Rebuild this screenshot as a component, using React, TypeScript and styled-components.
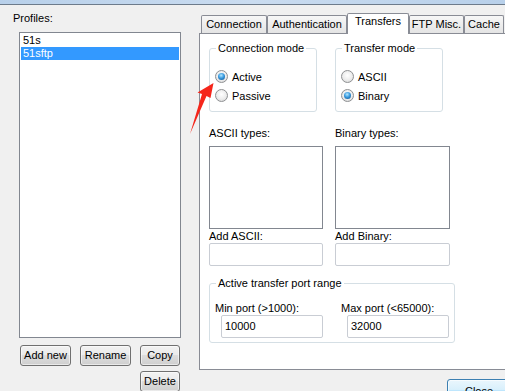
import styled, { createGlobalStyle } from "styled-components";

const GlobalStyle = createGlobalStyle`
  html, body {
    margin: 0;
    padding: 0;
    background: #f0f0f0;
  }
  body {
    font-family: "Liberation Sans", Arial, sans-serif;
    font-size: 11px;
    color: #000;
  }
`;

const Window = styled.div`
  position: relative;
  width: 505px;
  height: 391px;
  overflow: hidden;
  background: #f0f0f0;
  display: flex;
  flex-direction: column;
`;

const TitleStrip = styled.div`
  height: 4px;
  flex-shrink: 0;
  background: linear-gradient(to right, #b8d0ea, #cadcf0 50%, #b8d0ea);
  border-bottom: 1px solid #6d7b8b;
`;

const Body = styled.div`
  display: flex;
  flex: 1;
  min-height: 0;
`;

const LeftPane = styled.div`
  width: 199px;
  flex-shrink: 0;
  display: flex;
  flex-direction: column;
  padding-top: 7px;
`;

const PaneLabel = styled.div`
  padding-left: 13px;
  line-height: 13px;
`;

const ProfileList = styled.div`
  margin: 7px 0 0 19px;
  width: 162px;
  height: 306px;
  flex-shrink: 0;
  box-sizing: border-box;
  border: 1px solid #828790;
  background: #fff;
  padding: 1px;
`;

const ProfileItem = styled.div<{ $selected?: boolean }>`
  height: 13px;
  line-height: 13px;
  padding-left: 2px;
  background: ${(p) => (p.$selected ? "#3399ff" : "transparent")};
  color: ${(p) => (p.$selected ? "#fff" : "#000")};
`;

const ButtonGrid = styled.div`
  margin: 7px 0 0 20px;
  width: 160px;
  display: flex;
  flex-wrap: wrap;
  justify-content: flex-end;
  column-gap: 9px;
  row-gap: 5px;
`;

const PushButton = styled.button<{ $w: number }>`
  width: ${(p) => p.$w}px;
  height: 21px;
  box-sizing: border-box;
  padding: 0;
  border: 1px solid #707070;
  border-radius: 3px;
  background: linear-gradient(#f2f2f2 0%, #ebebeb 45%, #dddddd 50%, #cfcfcf 100%);
  box-shadow: inset 0 0 0 1px rgba(255, 255, 255, 0.55);
  font-family: inherit;
  font-size: 11px;
  line-height: 19px;
  color: #000;
`;

const RightPane = styled.div`
  width: 320px;
  flex-shrink: 0;
  display: flex;
  flex-direction: column;
  padding-top: 8px;
`;

const TabRow = styled.div`
  display: flex;
  align-items: flex-end;
  height: 21px;
  padding-left: 2px;
  margin-bottom: -1px;
  position: relative;
  z-index: 1;
`;

const Tab = styled.div<{ $w: number; $active?: boolean }>`
  width: ${(p) => p.$w}px;
  height: ${(p) => (p.$active ? 21 : 18)}px;
  margin-bottom: ${(p) => (p.$active ? 0 : 1)}px;
  box-sizing: border-box;
  flex-shrink: 0;
  border: 1px solid #898c95;
  border-bottom: none;
  border-radius: 2px 2px 0 0;
  background: ${(p) =>
    p.$active ? "#fff" : "linear-gradient(#f7f7f7, #e4e4e4)"};
  padding-top: ${(p) => (p.$active ? 1 : 2)}px;
  line-height: 13px;
  text-align: center;
  white-space: nowrap;
`;

const Panel = styled.div`
  width: 320px;
  height: 337px;
  flex-shrink: 0;
  box-sizing: border-box;
  border: 1px solid #898c95;
  background: #fff;
  padding: 8px 0 0 9px;
  display: flex;
  flex-direction: column;
`;

const TwoColumns = styled.div<{ $gap: number; $cols: string }>`
  display: grid;
  grid-template-columns: ${(p) => p.$cols};
  column-gap: ${(p) => p.$gap}px;
`;

const GroupBox = styled.fieldset<{ $w: number }>`
  margin: 0;
  padding: 0;
  width: ${(p) => p.$w}px;
  min-width: 0;
  box-sizing: border-box;
  border: 1px solid #d5dfe5;
  border-radius: 3px;
`;

const GroupTitle = styled.legend`
  margin-left: 6px;
  padding: 0 2px;
  line-height: 13px;
`;

const RadioList = styled.div`
  padding: 12px 0 6px 5px;
`;

const RadioRow = styled.div`
  display: flex;
  align-items: center;
  gap: 4px;
  height: 19px;
`;

const RadioDot = styled.span<{ $checked?: boolean }>`
  width: 13px;
  height: 13px;
  box-sizing: border-box;
  border-radius: 50%;
  border: 1px solid #8e9092;
  background: radial-gradient(circle at 50% 40%, #ffffff 0%, #ececec 55%, #cfcfcf 100%);
  display: flex;
  align-items: center;
  justify-content: center;

  &::after {
    content: "";
    display: ${(p) => (p.$checked ? "block" : "none")};
    width: 7px;
    height: 7px;
    border-radius: 50%;
    background: radial-gradient(circle at 45% 35%, #b4e8ff 0%, #3a9be0 45%, #0d4c85 100%);
  }
`;

const FieldColumn = styled.div`
  display: flex;
  flex-direction: column;
`;

const FieldLabel = styled.div<{ $mt?: number; $ml?: number }>`
  line-height: 13px;
  margin-top: ${(p) => p.$mt ?? 0}px;
  margin-left: ${(p) => p.$ml ?? 0}px;
  white-space: nowrap;
`;

const TypeList = styled.div`
  margin-top: 6px;
  height: 83px;
  box-sizing: border-box;
  border: 1px solid #828790;
  background: #fff;
`;

const TextBox = styled.div<{ $ml?: number }>`
  margin-left: ${(p) => p.$ml ?? 0}px;
  height: 23px;
  box-sizing: border-box;
  border: 1px solid #c9cdd4;
  border-radius: 2px;
  background: #fff;
  padding-left: 3px;
  line-height: 21px;
`;

const PortGroup = styled(GroupBox)`
  margin-top: 11px;
`;

const PortBody = styled.div`
  padding: 12px 0 4px 5px;
`;

const Footer = styled.div`
  display: flex;
  margin-top: 9px;
  padding-left: 248px;
`;

const DefaultButton = styled.button`
  width: 64px;
  height: 23px;
  flex-shrink: 0;
  box-sizing: border-box;
  padding: 2px 0 0;
  border: 1px solid #3c7fb1;
  border-radius: 3px;
  background: linear-gradient(#eaf6fd 0%, #d9f0fc 45%, #bee6fd 50%, #a7d9f5 100%);
  box-shadow: inset 0 0 0 1px rgba(255, 255, 255, 0.6);
  font-family: inherit;
  font-size: 11px;
  line-height: 13px;
  text-align: center;
  vertical-align: top;
  color: #000;
`;

const ArrowLayer = styled.svg`
  position: absolute;
  left: 0;
  top: 0;
  pointer-events: none;
`;

const profiles = ["51s", "51sftp"];

const tabs = [
  { label: "Connection", w: 66 },
  { label: "Authentication", w: 80 },
  { label: "Transfers", w: 62, active: true },
  { label: "FTP Misc.", w: 55 },
  { label: "Cache", w: 40 },
];

const Radio = (props: { label: string; checked?: boolean }) => (
  <RadioRow>
    <RadioDot $checked={props.checked} />
    <span>{props.label}</span>
  </RadioRow>
);

export default function App() {
  return (
    <Window>
      <GlobalStyle />
      <TitleStrip />
      <Body>
        <LeftPane>
          <PaneLabel>Profiles:</PaneLabel>
          <ProfileList>
            {profiles.map((name) => (
              <ProfileItem key={name} $selected={name === "51sftp"}>
                {name}
              </ProfileItem>
            ))}
          </ProfileList>
          <ButtonGrid>
            <PushButton $w={51}>Add new</PushButton>
            <PushButton $w={51}>Rename</PushButton>
            <PushButton $w={40}>Copy</PushButton>
            <PushButton $w={40}>Delete</PushButton>
          </ButtonGrid>
        </LeftPane>

        <RightPane>
          <TabRow>
            {tabs.map((t) => (
              <Tab key={t.label} $w={t.w} $active={t.active}>
                {t.label}
              </Tab>
            ))}
          </TabRow>
          <Panel>
            <TwoColumns $cols="114px 115px" $gap={12}>
              <GroupBox $w={108}>
                <GroupTitle>Connection mode</GroupTitle>
                <RadioList>
                  <Radio label="Active" checked />
                  <Radio label="Passive" />
                </RadioList>
              </GroupBox>
              <GroupBox $w={108}>
                <GroupTitle>Transfer mode</GroupTitle>
                <RadioList>
                  <Radio label="ASCII" />
                  <Radio label="Binary" checked />
                </RadioList>
              </GroupBox>
            </TwoColumns>

            <TwoColumns $cols="114px 115px" $gap={12} style={{ marginTop: 15 }}>
              <FieldColumn>
                <FieldLabel>ASCII types:</FieldLabel>
                <TypeList />
                <FieldLabel $mt={1}>Add ASCII:</FieldLabel>
                <TextBox />
              </FieldColumn>
              <FieldColumn>
                <FieldLabel>Binary types:</FieldLabel>
                <TypeList />
                <FieldLabel $mt={1}>Add Binary:</FieldLabel>
                <TextBox />
              </FieldColumn>
            </TwoColumns>

            <PortGroup $w={246}>
              <GroupTitle>Active transfer port range</GroupTitle>
              <PortBody>
                <TwoColumns $cols="108px 108px" $gap={18}>
                  <FieldColumn>
                    <FieldLabel>Min port (&gt;1000):</FieldLabel>
                    <TextBox $ml={6}>10000</TextBox>
                  </FieldColumn>
                  <FieldColumn>
                    <FieldLabel>Max port (&lt;65000):</FieldLabel>
                    <TextBox $ml={6}>32000</TextBox>
                  </FieldColumn>
                </TwoColumns>
              </PortBody>
            </PortGroup>
          </Panel>
          <Footer>
            <DefaultButton>Close</DefaultButton>
          </Footer>
        </RightPane>
      </Body>

      <ArrowLayer width="505" height="391" viewBox="0 0 505 391">
        <polygon
          points="213.5,83 197.5,92.5 202,94 190,134 206.5,96 210.5,98"
          fill="#f5261b"
        />
      </ArrowLayer>
    </Window>
  );
}
